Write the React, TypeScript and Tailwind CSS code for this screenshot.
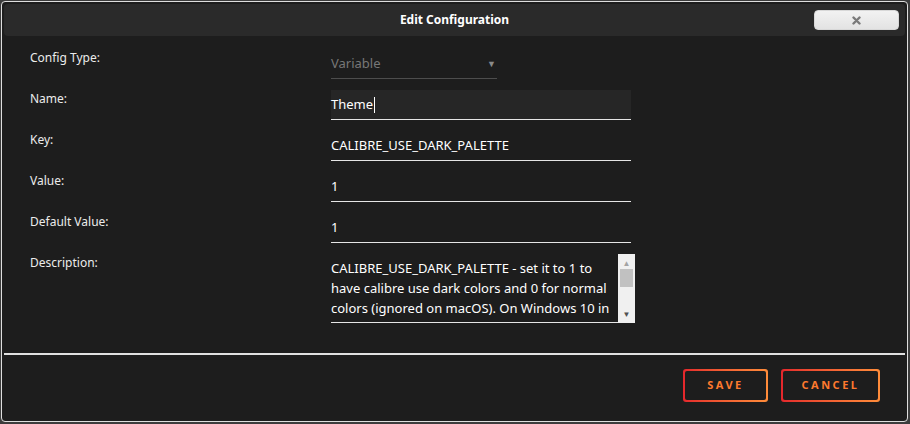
import React from 'react';

// ---------------------------------------------------------------------------
// Small pieces
// ---------------------------------------------------------------------------

function Label({ children }: { children: React.ReactNode }) {
  return (
    <div className="w-[327px] shrink-0 pl-[26px] pt-[1px] text-[12px] leading-[16px] text-[#ececec]">
      {children}
    </div>
  );
}

function TextField({ value }: { value: string }) {
  return (
    <div className="flex h-[30px] w-[300px] items-center border-b border-[#e6e6e6] text-[13px] text-white">
      <span>{value}</span>
    </div>
  );
}

function GradientButton({ label, width }: { label: string; width: string }) {
  return (
    <div className={`rounded-[3px] bg-gradient-to-r from-[#e4262c] to-[#ff8c3a] p-[2px] ${width}`}>
      <div className="flex h-[29px] items-center justify-center rounded-[2px] bg-[#1d1d1d] text-[11px] font-bold tracking-[2.5px] text-[#ff7a2e]">
        {label}
      </div>
    </div>
  );
}

// ---------------------------------------------------------------------------
// App
// ---------------------------------------------------------------------------

export default function App() {
  return (
    <div
      className="h-[424px] w-[910px] overflow-hidden bg-[#3c3c3c] pl-[1px] pt-[1px]"
      style={{ fontFamily: '"Noto Sans", "Open Sans", sans-serif' }}
    >
      <div className="flex h-[421px] w-[907px] flex-col rounded-[4px] border border-[#dedede] bg-[#1d1d1d] p-[2px]">
        {/* Title bar */}
        <div className="relative flex h-[32px] shrink-0 items-center justify-center rounded-[4px] bg-[#2a2a2a]">
          <span className="text-[12px] font-bold text-white">Edit Configuration</span>
          <div className="absolute right-[6px] top-[6px] flex h-[20px] w-[85px] items-center justify-center rounded-[4px] border border-[#d8d8d8] bg-gradient-to-b from-[#f2f2f2] to-[#e3e3e3]">
            <svg width="9" height="9" viewBox="0 0 9 9">
              <path d="M1.5 1.5 L7.5 7.5 M7.5 1.5 L1.5 7.5" stroke="#7a7a7a" strokeWidth="2.4" strokeLinecap="round" />
            </svg>
          </div>
        </div>

        {/* Form */}
        <div className="flex flex-col gap-[11px] pt-[13px]">
          <div className="flex">
            <Label>Config Type:</Label>
            <div className="flex h-[30px] w-[166px] items-center justify-between border-b border-[#4d4d4d] pr-[1px] text-[13px] text-[#777]">
              <span>Variable</span>
              <span className="text-[9px] text-[#8a8a8a]">▼</span>
            </div>
          </div>

          <div className="flex">
            <Label>Name:</Label>
            <div className="flex h-[30px] w-[300px] items-center border-b border-[#e6e6e6] bg-[#262626] text-[13px] text-white">
              <span>Theme</span>
              <span className="ml-[1px] inline-block h-[16px] w-[1px] bg-white" />
            </div>
          </div>

          <div className="flex">
            <Label>Key:</Label>
            <TextField value="CALIBRE_USE_DARK_PALETTE" />
          </div>

          <div className="flex">
            <Label>Value:</Label>
            <TextField value="1" />
          </div>

          <div className="flex">
            <Label>Default Value:</Label>
            <TextField value="1" />
          </div>

          <div className="flex">
            <Label>Description:</Label>
            <div className="flex h-[70px] w-[304px]">
              <div className="h-[69px] w-[287px] overflow-hidden border-b border-[#e6e6e6] pt-[4px] text-[13px] leading-[20px] text-white">
                CALIBRE_USE_DARK_PALETTE - set it to 1 to have calibre use dark colors and 0 for normal colors
                (ignored on macOS). On Windows 10 in
              </div>
              <div className="flex h-[69px] w-[17px] flex-col items-center bg-[#f0f0f0]">
                <span className="mt-[5px] text-[8px] leading-[8px] text-[#a3a3a3]">▲</span>
                <div className="mt-[2px] h-[18px] w-[13px] bg-[#c1c1c1]" />
                <span className="mt-auto mb-[5px] text-[8px] leading-[8px] text-[#505050]">▼</span>
              </div>
            </div>
          </div>
        </div>

        {/* Footer */}
        <div className="mt-[29px] h-[2px] bg-[#e0e0e0]" />
        <div className="flex justify-end gap-[13px] pr-[25px] pt-[14px]">
          <GradientButton label="SAVE" width="w-[85px]" />
          <GradientButton label="CANCEL" width="w-[99px]" />
        </div>
      </div>
    </div>
  );
}
